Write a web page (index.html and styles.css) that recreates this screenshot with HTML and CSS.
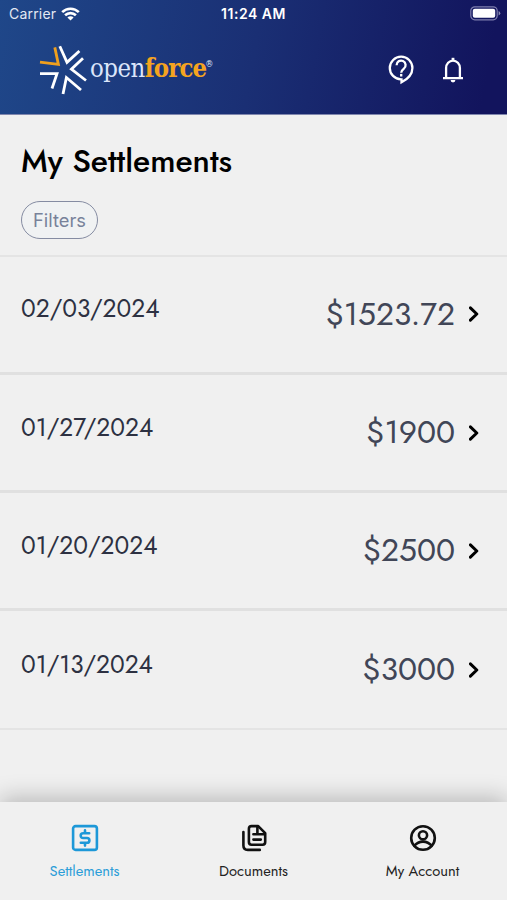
FILE: index.html
```html
<!DOCTYPE html>
<html lang="en">

<head>
    <meta charset="UTF-8">
    <meta name="viewport" content="width=device-width, initial-scale=1.0">
    <title>My Settlements</title>
    <link rel="stylesheet" href="styles.css">
</head>

<body>
    <div class="app">
        <header class="header">
            <div class="status">
                <div class="carrier">
                    <span>Carrier</span>
                    <svg width="19" height="14" viewBox="0 0 19 14" fill="none" stroke="#fff" stroke-width="2.6">
                        <path d="M1.2 5.1a11.8 11.8 0 0 1 16.6 0" />
                        <path d="M4.1 8.3a7.7 7.7 0 0 1 10.8 0" />
                        <path d="M9.5 13.6L6.4 10.5a4.4 4.4 0 0 1 6.2 0z" fill="#fff" stroke="none" />
                    </svg>
                </div>
                <span class="time">11:24 AM</span>
                <svg class="battery" width="31" height="15" viewBox="0 0 31 15">
                    <rect x=".8" y=".8" width="26.4" height="13" rx="4" fill="none" stroke="#7f7fae" stroke-width="1.2" />
                    <rect x="2.8" y="2.8" width="22.4" height="9" rx="2" fill="#fff" />
                    <path d="M28.6 5v4.6q1.7-.8 1.7-2.3T28.6 5z" fill="#8c8cb5" />
                </svg>
            </div>
            <div class="bar">
                <div class="logo">
                    <svg width="48" height="50" viewBox="0 0 48 50" fill="none" stroke="#fff" stroke-width="2.8">
                        <path d="M1 17.2L19.4 19.4 15.8 2.4" stroke="#f0a01e" />
                        <path d="M20.8 1.3L28 17.4 40.4 6" />
                        <path d="M44 13.2L32.4 24.2 47 35.5" />
                        <path d="M1 28.6H18L13 43.5" />
                        <path d="M24 49L27.4 32.5 42 45" />
                    </svg>
                    <span class="brand">open<b>force</b><sup>®</sup></span>
                </div>
                <div class="actions">
                    <svg width="26" height="30" viewBox="0 0 26 30" fill="none" stroke="#fff" stroke-width="2.3">
                        <path d="M13 24.3A11.3 11.3 0 1 1 24.4 13c0 6-4.4 11-10.9 14.3v-3z" />
                        <path d="M8.6 10.2a4.5 4.5 0 1 1 7.3 3.4c-1.7 1.3-2.7 2.1-2.7 4.1" />
                        <path d="M13.2 18.9v2.6" />
                    </svg>
                    <svg width="22" height="26" viewBox="0 0 22 26" fill="none" stroke="#fff" stroke-width="2.3">
                        <path d="M1 21.2h20M4.1 21V11a6.9 7.4 0 0 1 13.8 0v10" />
                        <path d="M11 .8v3" stroke-width="2.8" />
                        <path d="M8.6 23h4.8a2.4 2.4 0 0 1-4.8 0z" fill="#fff" stroke="none" />
                    </svg>
                </div>
            </div>
        </header>

        <section class="heading">
            <h1>My Settlements</h1>
            <button class="filters">Filters</button>
        </section>

        <ul class="list">
            <li>
                <span class="date">02/03/2024</span>
                <span class="amount">$1523.72</span>
                <svg class="chevron" width="10" height="16" viewBox="0 0 10 16"><path d="M1.4 1.8L7.8 8l-6.4 6.2" /></svg>
            </li>
            <li>
                <span class="date">01/27/2024</span>
                <span class="amount">$1900</span>
                <svg class="chevron" width="10" height="16" viewBox="0 0 10 16"><path d="M1.4 1.8L7.8 8l-6.4 6.2" /></svg>
            </li>
            <li>
                <span class="date">01/20/2024</span>
                <span class="amount">$2500</span>
                <svg class="chevron" width="10" height="16" viewBox="0 0 10 16"><path d="M1.4 1.8L7.8 8l-6.4 6.2" /></svg>
            </li>
            <li>
                <span class="date">01/13/2024</span>
                <span class="amount">$3000</span>
                <svg class="chevron" width="10" height="16" viewBox="0 0 10 16"><path d="M1.4 1.8L7.8 8l-6.4 6.2" /></svg>
            </li>
        </ul>

        <nav class="tabs">
            <a class="tab on">
                <svg width="28" height="28" viewBox="0 0 28 28">
                    <rect x="2.1" y="2.1" width="23.8" height="23.8" rx="2.5" />
                    <path d="M18.2 9.2h-6q-2.5 0-2.5 2.4T12.2 14h3.8q2.4 0 2.4 2.4t-2.4 2.4H9.8M14 6.4v2.8M14 19v2.6" />
                </svg>
                <span>Settlements</span>
            </a>
            <a class="tab">
                <svg width="28" height="28" viewBox="0 0 28 28">
                    <path d="M3.4 8v13.5q0 4.4 4.4 4.4h12" />
                    <path d="M11.5 2.1h6.7l7 7v9q0 2.6-2.6 2.6H11.5q-2.6 0-2.6-2.6V4.7q0-2.6 2.6-2.6z" />
                    <path d="M17.4 2.5v7.8h7.4M13.4 10.3h4M13.4 15.6h7.4" />
                </svg>
                <span>Documents</span>
            </a>
            <a class="tab">
                <svg width="28" height="28" viewBox="0 0 28 28">
                    <circle cx="14" cy="14" r="11.8" />
                    <circle cx="14" cy="11.3" r="4.1" />
                    <path d="M5.4 21.8q3.3-4.2 8.6-4.2t8.6 4.2" />
                </svg>
                <span>My Account</span>
            </a>
        </nav>
    </div>
</body>

</html>
```

FILE: styles.css
```css
* {
    padding: 0;
    margin: 0;
    box-sizing: border-box;
}

body {
    background: #f0f0f0;
    font-family: Jost, Lato, sans-serif;
}

.app {
    display: flex;
    flex-direction: column;
    height: 900px;
    overflow: hidden;
}

.header {
    height: 115px;
    background: linear-gradient(100deg, #1f4789 0%, #1a2f74 50%, #12145d 95%);
    border-bottom: 1px solid #8087ae;
    color: #fff;
}

.status {
    display: grid;
    grid-template-columns: 1fr auto 1fr;
    align-items: center;
    height: 27px;
    padding: 0 6px 0 9px;
    font-family: Inter, sans-serif;
    font-size: 14px;
}

.carrier {
    display: flex;
    align-items: center;
    gap: 5px;
    color: #e3e8f3;
    letter-spacing: .2px;
}

.time {
    margin-right: 3px;
    font-weight: 600;
    font-size: 14px;
    letter-spacing: .5px;
}

.battery {
    justify-self: end;
}

.bar {
    display: flex;
    justify-content: space-between;
    align-items: center;
    height: 86px;
    padding: 0 43px 0 39px;
}

.logo {
    display: flex;
    align-items: center;
    gap: 3px;
}

.brand {
    margin-top: -4px;
    font-family: "DejaVu Serif Condensed", "DejaVu Serif", serif;
    font-stretch: condensed;
    font-size: 25.5px;
    line-height: 30px;
    letter-spacing: -.5px;
    color: #dbe5fa;
    white-space: nowrap;
}

.brand b {
    color: #f5a41f;
    letter-spacing: -.9px;
}

.brand sup {
    margin-left: -1px;
    font-size: 9px;
    line-height: 1;
    vertical-align: 10px;
}

.actions {
    display: flex;
    align-items: center;
    gap: 28px;
}

.heading {
    height: 141.6px;
    padding: 26px 22px 0 21px;
    border-bottom: 2px solid #e4e4e4;
}

h1 {
    font-size: 31.8px;
    font-weight: 500;
    line-height: 40px;
    color: #000;
}

.filters {
    display: block;
    width: 77px;
    height: 38px;
    margin-top: 20px;
    padding-bottom: 1px;
    border: 1.5px solid #858ca2;
    border-radius: 19px;
    background: #f0f2f3;
    font-family: Inter, sans-serif;
    font-size: 18.3px;
    color: #78829a;
}

.list {
    list-style: none;
}

.list li {
    display: flex;
    align-items: center;
    height: 118.3px;
    padding: 0 28px 0 21px;
    border-bottom: 3px solid #e0e0e0;
}

.list li:last-child {
    border-bottom: 2px solid #e4e4e4;
}

.date {
    flex: 1;
    padding-bottom: 11px;
    font-size: 24.5px;
    color: #2d3142;
}

.amount {
    margin-right: 14px;
    padding-bottom: 1px;
    font-size: 31.7px;
    font-weight: 400;
    color: #414657;
}

.chevron {
    fill: none;
    stroke: #000;
    stroke-width: 3;
    stroke-linejoin: round;
    stroke-linecap: round;
}

.tabs {
    display: grid;
    grid-template-columns: repeat(3, 1fr);
    height: 98px;
    margin-top: auto;
    background: #f0f0f0;
    box-shadow: 0 -4px 22px rgba(0, 0, 0, .24);
}

.tab {
    display: flex;
    flex-direction: column;
    align-items: center;
    gap: 9px;
    padding-top: 22px;
    font-size: 14.7px;
    line-height: 20px;
    color: #222;
}

.tab svg {
    fill: none;
    stroke: #111;
    stroke-width: 2.6;
    stroke-linecap: round;
    stroke-linejoin: round;
}

.tab.on {
    color: #2b9dd8;
}

.tab.on svg {
    stroke: #1d98d8;
}
```
